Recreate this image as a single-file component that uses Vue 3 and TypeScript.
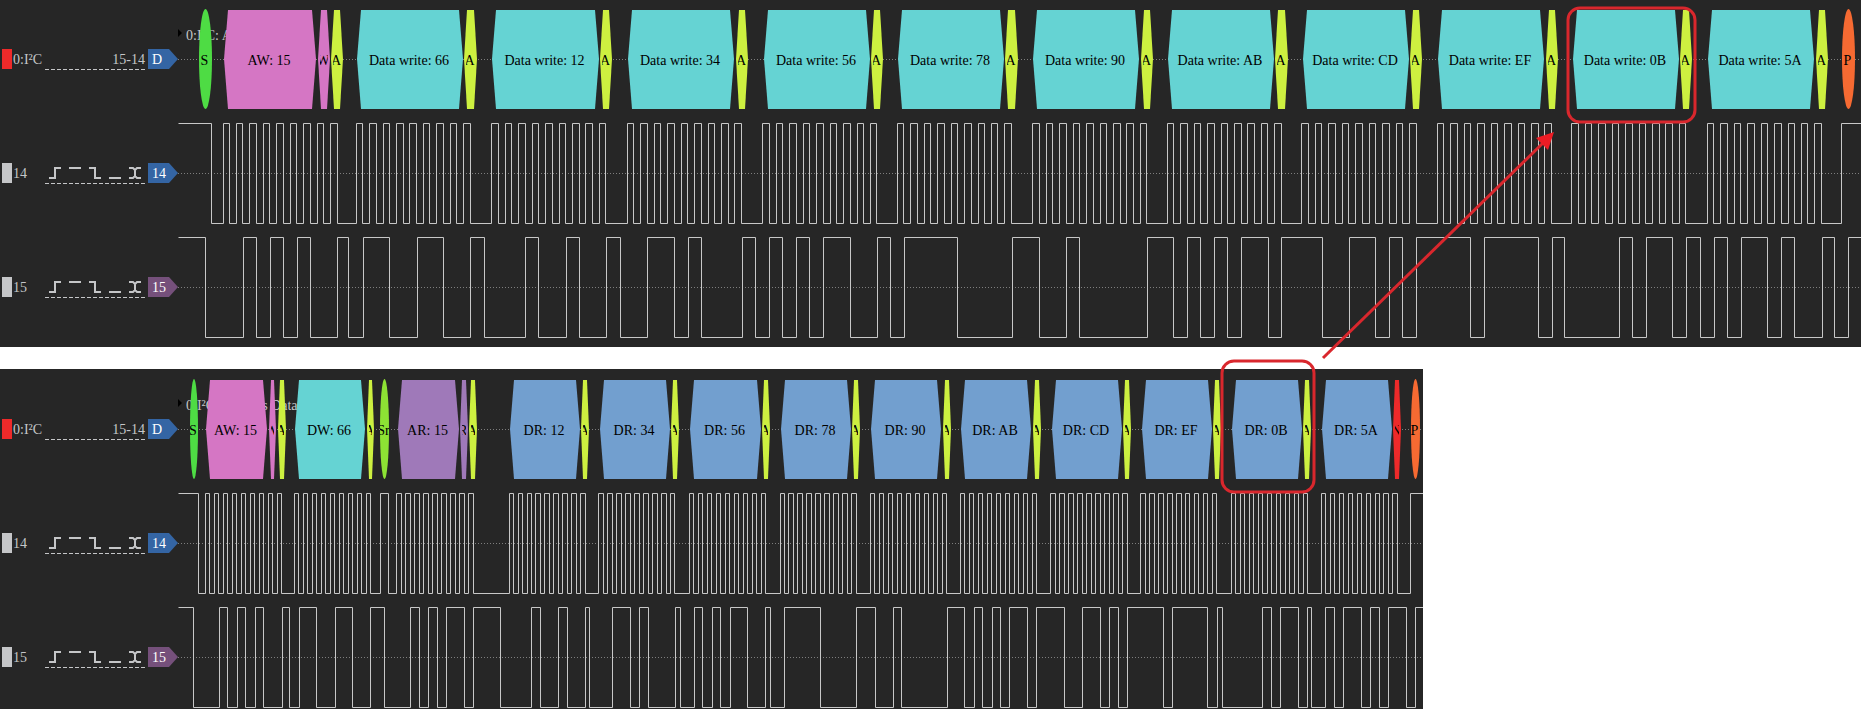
<script setup lang="ts">
type Kind = 'start' | 'repeat' | 'addressWrite' | 'addressRead' | 'ack' | 'nack' | 'write' | 'read' | 'stop'

interface Block {
  kind: Kind
  text: string
  from: number
  to: number
}

interface Signal {
  name: string
  tone: string
  edges: number[]
}

interface Capture {
  id: string
  protocol: string
  pins: string
  blocks: Block[]
  signals: Signal[]
}

// Width of the label column; sample positions are counted from the panel's left edge.
const GUTTER = 178
const HIGH = 1
const LOW = 101

const block = (kind: Kind, text: string, from: number, to: number): Block => ({ kind, text, from, to })

// Each byte: label, block start, block end, acknowledge start, acknowledge end.
type ByteSpan = [string, number, number, number, number]
const bytes = (kind: Kind, prefix: string, spans: ByteSpan[]): Block[] =>
  spans.flatMap(([value, from, to, ackFrom, ackTo]) => [
    block(kind, `${prefix}: ${value}`, from, to),
    block('ack', 'A', ackFrom, ackTo),
  ])

const captures: Capture[] = [
  {
    id: 'write',
    protocol: '0:I²C',
    pins: '15-14',
    blocks: [
      block('start', 'S', 199, 212),
      block('addressWrite', 'AW: 15', 224, 316),
      block('addressWrite', 'W', 318, 330),
      block('ack', 'A', 331, 343),
      ...bytes('write', 'Data write', [
        ['66', 357, 463, 464, 477],
        ['12', 492, 599, 600, 612],
        ['34', 628, 734, 736, 748],
        ['56', 764, 870, 871, 883],
        ['78', 898, 1004, 1005, 1018],
        ['90', 1033, 1139, 1141, 1153],
        ['AB', 1168, 1274, 1275, 1288],
        ['CD', 1303, 1409, 1410, 1422],
        ['EF', 1438, 1544, 1546, 1558],
        ['0B', 1573, 1679, 1680, 1692],
        ['5A', 1708, 1814, 1816, 1828],
      ]),
      block('stop', 'P', 1842, 1855),
    ],
    signals: [
      {
        name: '14',
        tone: 'blue',
        edges: [
          211,
          223, 229, 236, 242, 249, 256, 263, 269, 276, 283, 290, 296, 303, 310, 317, 323, 330, 337,
          356, 362, 369, 376, 383, 389, 396, 403, 409, 416, 423, 429, 436, 443, 450, 456, 463, 470,
          491, 498, 505, 511, 518, 525, 532, 538, 545, 552, 559, 565, 572, 579, 585, 592, 599, 605,
          627, 633, 640, 647, 654, 660, 667, 674, 681, 687, 694, 701, 708, 714, 721, 728, 734, 741,
          762, 769, 776, 782, 789, 796, 803, 809, 816, 823, 830, 836, 843, 850, 857, 863, 870, 876,
          897, 903, 910, 917, 924, 930, 937, 944, 951, 957, 964, 971, 978, 984, 991, 997, 1004, 1011,
          1032, 1039, 1046, 1052, 1059, 1066, 1073, 1079, 1086, 1093, 1100, 1106, 1113, 1120, 1126, 1133, 1140, 1146,
          1167, 1173, 1180, 1187, 1194, 1200, 1207, 1214, 1221, 1227, 1234, 1241, 1247, 1254, 1261, 1267, 1274, 1281,
          1301, 1308, 1315, 1321, 1328, 1335, 1342, 1348, 1355, 1362, 1369, 1375, 1382, 1389, 1396, 1402, 1409, 1416,
          1437, 1443, 1450, 1457, 1464, 1470, 1477, 1484, 1491, 1497, 1504, 1511, 1518, 1524, 1531, 1538, 1544, 1551,
          1571, 1578, 1585, 1591, 1598, 1605, 1612, 1618, 1625, 1632, 1639, 1645, 1652, 1659, 1665, 1672, 1679, 1685,
          1707, 1713, 1720, 1727, 1734, 1740, 1747, 1754, 1761, 1767, 1774, 1781, 1788, 1794, 1801, 1807, 1814, 1821,
          1841,
        ],
      },
      {
        name: '15',
        tone: 'purple',
        edges: [
          205, 243, 256, 270, 283, 297, 310, 337, 348, 363, 389, 417, 443, 470, 484, 525, 538, 566, 579, 606, 620,
          647, 674, 688, 701, 742, 755, 769, 782, 796, 809, 823, 850, 877, 890, 904, 957, 1012, 1039, 1066, 1079,
          1147, 1173, 1187, 1200, 1214, 1227, 1241, 1268, 1281, 1322, 1349, 1375, 1389, 1402, 1416, 1470, 1484,
          1538, 1552, 1564, 1619, 1632, 1646, 1672, 1686, 1700, 1714, 1727, 1741, 1767, 1781, 1794, 1822, 1834, 1848,
        ],
      },
    ],
  },
  {
    id: 'read',
    protocol: '0:I²C',
    pins: '15-14',
    blocks: [
      block('start', 'S', 190, 198),
      block('addressWrite', 'AW: 15', 206, 267),
      block('addressWrite', 'W', 269, 276),
      block('ack', 'A', 278, 286),
      ...bytes('write', 'DW', [['66', 295, 365, 367, 374]]),
      block('repeat', 'Sr', 380, 389),
      block('addressRead', 'AR: 15', 398, 459),
      block('addressRead', 'R', 460, 468),
      block('ack', 'A', 469, 477),
      ...bytes('read', 'DR', [
        ['12', 510, 580, 581, 589],
        ['34', 600, 670, 671, 679],
        ['56', 690, 761, 762, 770],
        ['78', 781, 851, 852, 860],
        ['90', 871, 941, 943, 951],
        ['AB', 961, 1031, 1033, 1041],
        ['CD', 1052, 1122, 1123, 1131],
        ['EF', 1142, 1212, 1213, 1221],
        ['0B', 1232, 1302, 1303, 1311],
      ]),
      block('read', 'DR: 5A', 1322, 1392),
      block('nack', 'N', 1393, 1401),
      block('stop', 'P', 1411, 1420),
    ],
    signals: [
      {
        name: '14',
        tone: 'blue',
        edges: [
          198,
          205, 209, 214, 218, 223, 227, 232, 236, 241, 245, 250, 254, 259, 263, 268, 272, 277, 281,
          294, 298, 303, 307, 312, 316, 321, 325, 330, 334, 339, 343, 348, 352, 357, 361, 366, 370,
          380, 388,
          396, 401, 405, 410, 414, 419, 423, 428, 432, 437, 441, 446, 450, 455, 459, 464, 468, 473,
          509, 513, 518, 522, 527, 531, 535, 540, 544, 549, 553, 558, 562, 567, 571, 576, 580, 585,
          598, 603, 607, 612, 616, 621, 625, 630, 634, 639, 643, 648, 652, 657, 661, 666, 670, 674,
          689, 693, 698, 702, 707, 711, 716, 720, 725, 729, 734, 738, 743, 747, 752, 756, 761, 765,
          780, 784, 788, 793, 797, 802, 806, 811, 815, 820, 824, 829, 833, 838, 842, 847, 851, 856,
          870, 874, 879, 883, 888, 892, 897, 901, 906, 910, 915, 919, 924, 928, 933, 937, 942, 946,
          960, 964, 969, 973, 978, 982, 987, 991, 996, 1000, 1005, 1009, 1014, 1018, 1023, 1027, 1032, 1036,
          1050, 1055, 1059, 1064, 1068, 1073, 1077, 1082, 1086, 1091, 1095, 1100, 1104, 1109, 1113, 1118, 1122, 1127,
          1140, 1145, 1149, 1154, 1158, 1163, 1167, 1172, 1176, 1181, 1185, 1189, 1194, 1198, 1203, 1207, 1212, 1216,
          1231, 1235, 1240, 1244, 1249, 1253, 1258, 1262, 1267, 1271, 1276, 1280, 1285, 1289, 1294, 1298, 1303, 1307,
          1321, 1325, 1330, 1334, 1339, 1343, 1348, 1352, 1357, 1361, 1366, 1370, 1375, 1379, 1383, 1388, 1392, 1397,
          1410,
        ],
      },
      {
        name: '15',
        tone: 'purple',
        edges: [
          193, 219, 227, 237, 245, 255, 263, 282, 289, 299, 316, 335, 352, 370, 384, 410, 419, 428, 437, 446, 464,
          473, 500, 531, 540, 558, 567, 585, 589, 612, 630, 639, 648, 675, 680, 694, 702, 712, 720, 730, 747, 765,
          770, 784, 820, 856, 875, 893, 901, 947, 964, 974, 982, 992, 1000, 1009, 1027, 1036, 1064, 1082, 1100,
          1109, 1118, 1127, 1163, 1172, 1207, 1217, 1222, 1262, 1271, 1280, 1298, 1307, 1311, 1325, 1334, 1343,
          1361, 1370, 1379, 1388, 1406, 1415,
        ],
      },
    ],
  },
]

const triggers = [
  { name: 'Rising edge', path: 'M4 15H10M10 16V4M10 5H16' },
  { name: 'High', path: 'M4 5H16' },
  { name: 'Falling edge', path: 'M4 5H10M10 4V16M10 15H16' },
  { name: 'Low', path: 'M4 15H16' },
  { name: 'Any edge', path: 'M4 5H8L10 7V13L8 15H4M16 5H12L10 7M10 13L12 15H16' },
]

// Every trace starts high and flips at each edge.
function wave(edges: number[]): string {
  let level = HIGH
  let path = `M0 ${level}`
  for (const edge of edges) {
    level = level === HIGH ? LOW : HIGH
    path += `H${edge - GUTTER}V${level}`
  }
  return `${path}H4000`
}

const isRound = (b: Block) => b.kind === 'start' || b.kind === 'repeat' || b.kind === 'stop'

function outline(b: Block): string {
  const left = b.from - GUTTER
  const right = b.to - GUTTER
  const slope = b.to - b.from > 20 ? 4 : b.to - b.from > 10 ? 3 : 2
  return `${left},51 ${left + slope},2 ${right - slope},2 ${right},51 ${right - slope},101 ${left + slope},101`
}

const middle = (b: Block) => (b.from + b.to) / 2 - GUTTER
// Labels are cut off where they would run past a pointed block.
const inset = (b: Block) => (isRound(b) ? 0 : 2)
const clipId = (capture: Capture, index: number) => `clip-${capture.id}-${index}`
</script>

<template>
  <main class="page">
    <section v-for="capture in captures" :key="capture.id" class="panel" :class="capture.id">
      <div class="row">
        <header class="label">
          <span class="swatch decoder"></span>
          <span class="name">{{ capture.protocol }}</span>
          <span class="pins">{{ capture.pins }}</span>
          <span class="tag blue">D</span>
        </header>
        <svg class="plot" role="img" aria-label="Decoded I²C frames">
          <defs>
            <clipPath v-for="(b, i) in capture.blocks" :id="clipId(capture, i)" :key="i">
              <rect :x="b.from - GUTTER + inset(b)" y="0" :width="b.to - b.from - 2 * inset(b)" height="102" />
            </clipPath>
          </defs>
          <line class="axis" x1="0" y1="51.5" x2="100%" y2="51.5" />
          <path class="marker" d="M0 21L4 25L0 29Z" />
          <text class="caption" x="8" y="32">{{ capture.protocol }}: Address Data</text>
          <g v-for="(b, i) in capture.blocks" :key="i">
            <ellipse v-if="isRound(b)" :class="b.kind" :cx="middle(b)" cy="51" :rx="(b.to - b.from) / 2" ry="50" />
            <polygon v-else :class="b.kind" :points="outline(b)" />
            <text class="value" :x="middle(b) - 1" y="57" :clip-path="`url(#${clipId(capture, i)})`">{{ b.text }}</text>
          </g>
        </svg>
      </div>
      <div v-for="signal in capture.signals" :key="signal.name" class="row">
        <header class="label">
          <span class="swatch"></span>
          <span class="name">{{ signal.name }}</span>
          <span class="triggers">
            <button v-for="t in triggers" :key="t.name" type="button" class="trigger" :aria-label="t.name">
              <svg class="glyph" width="20" height="20" viewBox="0 0 20 20"><path :d="t.path" /></svg>
            </button>
          </span>
          <span class="tag" :class="signal.tone">{{ signal.name }}</span>
        </header>
        <svg class="plot" role="img" :aria-label="`Channel ${signal.name}`">
          <line class="axis" x1="0" y1="51.5" x2="100%" y2="51.5" />
          <path class="wave" transform="translate(0.5 0.5)" :d="wave(signal.edges)" />
        </svg>
      </div>
    </section>

    <svg class="notes" aria-hidden="true">
      <rect class="frame" x="1568" y="8" width="127" height="114" rx="12" />
      <rect class="frame" x="1222" y="361" width="92" height="131" rx="12" />
      <line class="shaft" x1="1323" y1="358" x2="1543" y2="143" />
      <path class="head" d="M1554 132L1548 150L1536 138Z" />
    </svg>
  </main>
</template>

<style>
body {
  margin: 0;
  background: #ffffff;
}
</style>

<style scoped>
.page {
  position: relative;
  display: grid;
  grid-template-columns: 1423fr 438fr;
  row-gap: 22px;
  overflow: hidden;
  padding-bottom: 13px;
  font-family: "Liberation Serif", "Times New Roman", serif;
  font-size: 14px;
  line-height: 22px;
}

.panel {
  display: flex;
  flex-direction: column;
  gap: 12px;
  min-width: 0;
  background: #262626;
  color: #c5c6c8;
}

.panel.write {
  grid-column: 1 / 3;
  padding: 8px 0 9px;
}

.panel.read {
  grid-column: 1 / 2;
  padding: 9px 0 1px;
}

.row {
  display: flex;
  align-items: center;
}

.label {
  display: flex;
  flex: none;
  align-items: flex-start;
  box-sizing: border-box;
  width: 178px;
  height: 20px;
  padding-left: 2px;
}

.swatch {
  width: 10px;
  height: 20px;
  background: #c5c6c8;
}

.swatch.decoder {
  background: #ee2a2a;
}

.name {
  width: 33px;
  box-sizing: border-box;
  padding-left: 1px;
  white-space: nowrap;
}

.pins,
.triggers {
  width: 100px;
  height: 21px;
  margin-right: 3px;
  background: repeating-linear-gradient(90deg, #c5c6c8 0 4px, transparent 4px 6px) left bottom / 100% 1px no-repeat;
  text-align: right;
}

.triggers {
  display: flex;
}

.trigger {
  width: 20px;
  height: 20px;
  padding: 0;
  border: 0;
  background: none;
}

.glyph {
  display: block;
}

.glyph path {
  fill: none;
  stroke: #c5c6c8;
  stroke-width: 2;
}

.tag {
  box-sizing: border-box;
  width: 30px;
  height: 20px;
  padding-left: 4px;
  clip-path: polygon(0 0, 70% 0, 100% 50%, 70% 100%, 0 100%);
  color: #ffffff;
}

.blue {
  background: #3465a4;
}

.purple {
  background: #75507b;
}

.plot {
  display: block;
  flex: 1;
  min-width: 0;
  height: 102px;
  overflow: hidden;
}

.axis {
  stroke: #7e7e7e;
  stroke-dasharray: 1 2;
}

.wave {
  fill: none;
  stroke: #c8c8c8;
}

.marker {
  fill: #000000;
}

.caption {
  fill: #c5c6c8;
}

.value {
  fill: #000000;
  text-anchor: middle;
}

.start {
  fill: #4edc44;
}

.repeat {
  fill: #8de234;
}

.addressWrite {
  fill: #d576c4;
}

.addressRead {
  fill: #9f79b9;
}

.ack {
  fill: #cdf040;
}

.nack {
  fill: #ee2a2a;
}

.write {
  fill: #65d3d3;
}

.read {
  fill: #729fcf;
}

.stop {
  fill: #f66a32;
}

.notes {
  position: absolute;
  top: 0;
  left: 0;
  width: 100%;
  height: 100%;
  pointer-events: none;
}

.frame,
.shaft {
  fill: none;
  stroke: #d9272d;
  stroke-width: 3;
}

.head {
  fill: #ec1c24;
}
</style>
